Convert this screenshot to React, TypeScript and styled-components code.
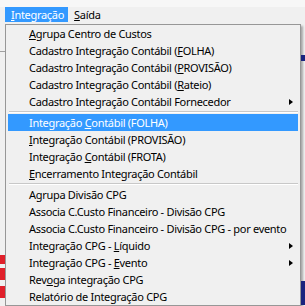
import React from "react";
import styled, { createGlobalStyle } from "styled-components";

const GlobalStyle = createGlobalStyle`
  html, body {
    margin: 0;
    padding: 0;
    background: #f0f0f0;
  }
  body {
    font-family: "Noto Sans", "Open Sans", sans-serif;
    font-size: 11px;
    letter-spacing: -0.3px;
    color: #000;
  }
`;

const Screen = styled.div`
  width: 305px;
  height: 306px;
  overflow: hidden;
  background: #f0f0f0;
  display: flex;
  flex-direction: column;
`;

const TopStrip = styled.div`
  height: 7px;
  flex-shrink: 0;
  background: #f7f7f7;
`;

const MenuBar = styled.div`
  height: 17px;
  flex-shrink: 0;
  display: flex;
  align-items: flex-start;
  padding-left: 5px;
  background: #f0f0f0;
`;

const BarTitle = styled.div<{ $active?: boolean }>`
  height: 15px;
  line-height: 15px;
  padding: 0 4px 0 6px;
  background: ${({ $active }) => ($active ? "#3399ff" : "transparent")};
  color: ${({ $active }) => ($active ? "#fff" : "#000")};
`;

const Body = styled.div`
  display: flex;
  flex: 1;
`;

const Gutter = styled.div<{ $w: number }>`
  width: ${({ $w }) => $w}px;
  flex-shrink: 0;
  display: flex;
  flex-direction: column;
`;

const GutterLine = styled.div`
  height: 1px;
  background: #a0a0a0;
  margin-top: 27px;
`;

const GutterMark = styled.div<{ $top: number; $h: number; $color: string }>`
  height: ${({ $h }) => $h}px;
  margin-top: ${({ $top }) => $top}px;
  background: ${({ $color }) => $color};
`;

const Dropdown = styled.div`
  width: 296px;
  flex-shrink: 0;
  box-sizing: border-box;
  border: 1px solid #979797;
  background: #f0f0f0;
  padding: 0 2px;
  box-shadow: 2px 2px 2px rgba(0, 0, 0, 0.3);
  align-self: flex-start;
`;

const Item = styled.div<{ $active?: boolean }>`
  height: 17px;
  display: flex;
  align-items: center;
  padding-left: 21px;
  white-space: nowrap;
  background: ${({ $active }) => ($active ? "#3399ff" : "transparent")};
  color: ${({ $active }) => ($active ? "#fff" : "#000")};
`;

const Label = styled.span`
  line-height: 17px;
`;

const Arrow = styled.span`
  margin-left: auto;
  margin-right: 5px;
  width: 0;
  height: 0;
  border-top: 3.5px solid transparent;
  border-bottom: 3.5px solid transparent;
  border-left: 4px solid #000;
`;

const Separator = styled.div`
  height: 1px;
  margin: 1px 0 1px 1px;
  background: #c8c8c8;
  border-bottom: 1px solid #fff;
`;

type Entry =
  | { sep: true }
  | { label: React.ReactNode; sub?: boolean; active?: boolean };

const entries: Entry[] = [
  { label: <><u>A</u>grupa Centro de Custos</> },
  { label: <>Cadastro Integração Contábil (<u>F</u>OLHA)</> },
  { label: <>Cadastro Integração Contábil (<u>P</u>ROVISÃO)</> },
  { label: <>Cadastro Integração Contábil (<u>R</u>ateio)</> },
  { label: <>Cadastro Integração Contábil Fornecedor</>, sub: true },
  { sep: true },
  { label: <>Integração <u>C</u>ontábil (FOLHA)</>, active: true },
  { label: <><u>I</u>ntegração Contábil (PROVISÃO)</> },
  { label: <>Integração <u>C</u>ontábil (FROTA)</> },
  { label: <><u>E</u>ncerramento Integração Contábil</> },
  { sep: true },
  { label: <>Agrupa Divisão CPG</> },
  { label: <>Associa C.Custo Financeiro - Divisão CPG</> },
  { label: <>Associa C.Custo Financeiro - Divisão CPG - por evento</> },
  { label: <>Integração CPG - <u>L</u>íquido</>, sub: true },
  { label: <>Integração CPG - <u>E</u>vento</>, sub: true },
  { label: <>Rev<u>o</u>ga integração CPG</> },
  { label: <>Relatório de Integração CPG</> },
];

export default function App() {
  return (
    <Screen>
      <GlobalStyle />
      <TopStrip />
      <MenuBar>
        <BarTitle $active>
          <u>I</u>ntegração
        </BarTitle>
        <BarTitle>
          <u>S</u>aída
        </BarTitle>
      </MenuBar>
      <Body>
        <Gutter $w={5}>
          <GutterLine />
          <GutterMark $top={203} $h={9} $color="#e0202a" />
          <GutterMark $top={4} $h={12} $color="#e0202a" />
          <GutterMark $top={6} $h={12} $color="#e0202a" />
        </Gutter>
        <Dropdown>
          {entries.map((e, i) =>
            "sep" in e ? (
              <Separator key={i} />
            ) : (
              <Item key={i} $active={e.active}>
                <Label>{e.label}</Label>
                {e.sub && <Arrow />}
              </Item>
            )
          )}
        </Dropdown>
        <Gutter $w={4}>
          <GutterMark $top={31} $h={6} $color="#1a237e" />
          <GutterMark $top={220} $h={24} $color="#1a237e" />
        </Gutter>
      </Body>
    </Screen>
  );
}
